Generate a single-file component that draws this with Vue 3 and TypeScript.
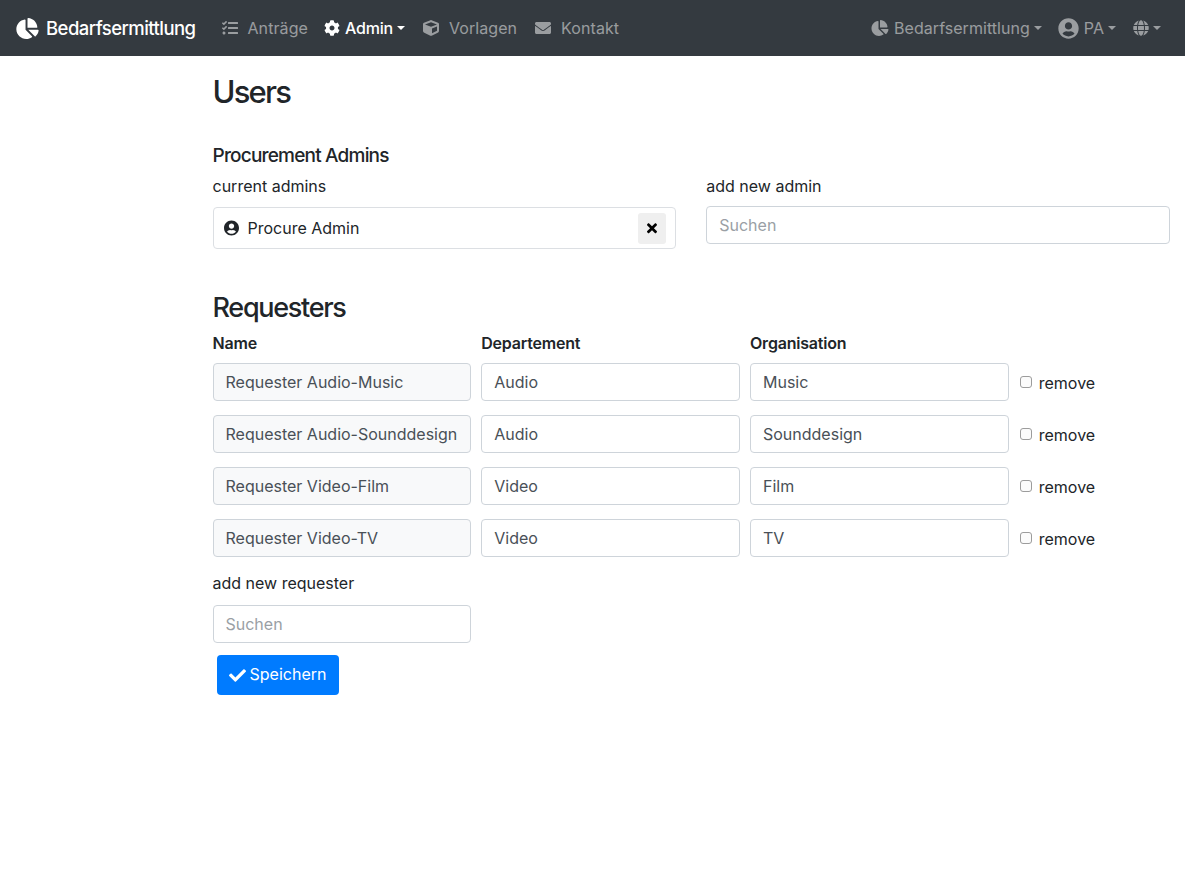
<script setup lang="ts">
interface Requester {
  name: string
  department: string
  organisation: string
}

const icons = {
  pie: { box: '0 0 544 512', d: 'M527.79 288H290.5l158.03 158.03c6.04 6.04 15.98 6.53 22.19.68 38.7-36.46 65.32-85.61 73.13-140.86 1.34-9.46-6.51-17.85-16.06-17.85zm-15.83-64.8C503.72 103.74 408.26 8.28 288.8.04 279.68-.59 272 7.1 272 16.24V240h223.77c9.14 0 16.82-7.68 16.19-16.8zM224 288V50.71c0-9.55-8.39-17.4-17.84-16.06C86.99 51.49-4.1 155.6.14 280.37 4.5 408.51 114.83 513.59 243.03 511.98c50.4-.63 96.97-16.87 135.26-44.03 7.9-5.6 8.42-17.23 1.57-24.08L224 288z' },
  tasks: { box: '0 0 512 512', d: 'M139.61 35.5a12 12 0 0 0-17 0L58.93 98.81l-22.7-22.12a12 12 0 0 0-17 0L3.53 92.41a12 12 0 0 0 0 17l47.59 47.4a12.78 12.78 0 0 0 17.61 0l15.59-15.62L156.52 69a12.09 12.09 0 0 0 .09-17zm0 159.19a12 12 0 0 0-17 0l-63.68 63.72-22.7-22.1a12 12 0 0 0-17 0L3.53 252a12 12 0 0 0 0 17L51 316.5a12.77 12.77 0 0 0 17.6 0l15.7-15.69 72.2-72.22a12 12 0 0 0 .09-16.9zM64 368c-26.49 0-48.59 21.5-48.59 48S37.53 464 64 464a48 48 0 0 0 0-96zm432 16H208a16 16 0 0 0-16 16v32a16 16 0 0 0 16 16h288a16 16 0 0 0 16-16v-32a16 16 0 0 0-16-16zm0-320H208a16 16 0 0 0-16 16v32a16 16 0 0 0 16 16h288a16 16 0 0 0 16-16V80a16 16 0 0 0-16-16zm0 160H208a16 16 0 0 0-16 16v32a16 16 0 0 0 16 16h288a16 16 0 0 0 16-16v-32a16 16 0 0 0-16-16z' },
  cog: { box: '0 0 512 512', d: 'M487.4 315.7l-42.6-24.6c4.3-23.2 4.3-47 0-70.2l42.6-24.6c4.9-2.8 7.1-8.6 5.5-14-11.1-35.6-30-67.8-54.7-94.6-3.8-4.1-10-5.1-14.8-2.3L380.8 110c-17.9-15.4-38.5-27.3-60.8-35.1V25.8c0-5.6-3.9-10.5-9.4-11.7-36.7-8.2-74.3-7.8-109.2 0-5.5 1.2-9.4 6.1-9.4 11.7V75c-22.2 7.9-42.8 19.8-60.8 35.1L88.7 85.5c-4.9-2.8-11-1.9-14.8 2.3-24.7 26.7-43.6 58.9-54.7 94.6-1.7 5.4.6 11.2 5.5 14L67.3 221c-4.3 23.2-4.3 47 0 70.2l-42.6 24.6c-4.9 2.8-7.1 8.6-5.5 14 11.1 35.6 30 67.8 54.7 94.6 3.8 4.1 10 5.1 14.8 2.3l42.6-24.6c17.9 15.4 38.5 27.3 60.8 35.1v49.2c0 5.6 3.9 10.5 9.4 11.7 36.7 8.2 74.3 7.8 109.2 0 5.5-1.2 9.4-6.1 9.4-11.7v-49.2c22.2-7.9 42.8-19.8 60.8-35.1l42.6 24.6c4.9 2.8 11 1.9 14.8-2.3 24.7-26.7 43.6-58.9 54.7-94.6 1.5-5.5-.7-11.3-5.6-14.1zM256 336c-44.1 0-80-35.9-80-80s35.9-80 80-80 80 35.9 80 80-35.9 80-80 80z' },
  cube: { box: '0 0 512 512', d: 'M239.1 6.3l-208 78c-18.7 7-31.1 25-31.1 45v225.1c0 18.2 10.3 34.8 26.5 42.9l208 104c13.5 6.8 29.4 6.8 42.9 0l208-104c16.3-8.1 26.5-24.8 26.5-42.9V129.3c0-20-12.4-37.9-31.1-44.9l-208-78C262 2.2 250 2.2 239.1 6.3zM256 68.4l192 72v1.1l-192 78-192-78v-1.1l192-72zm32 356V275.5l160-65v133.9l-160 80z' },
  envelope: { box: '0 0 512 512', d: 'M502.3 190.8c3.9-3.1 9.7-.2 9.7 4.7V400c0 26.5-21.5 48-48 48H48c-26.5 0-48-21.5-48-48V195.6c0-5 5.7-7.8 9.7-4.7 22.4 17.4 52.1 39.5 154.1 113.6 21.1 15.4 56.7 47.8 92.2 47.6 35.7.3 72-32.8 92.3-47.6 102-74.1 131.6-96.3 154-113.7zM256 320c23.2.4 56.6-29.2 73.4-41.4 132.7-96.3 142.8-104.7 173.4-128.7 5.8-4.5 9.2-11.5 9.2-18.9v-19c0-26.5-21.5-48-48-48H48C21.5 64 0 85.5 0 112v19c0 7.4 3.4 14.3 9.2 18.9 30.6 23.9 40.7 32.4 173.4 128.7 16.8 12.2 50.2 41.8 73.4 41.4z' },
  user: { box: '0 0 496 512', d: 'M248 8C111 8 0 119 0 256s111 248 248 248 248-111 248-248S385 8 248 8zm0 96c48.6 0 88 39.4 88 88s-39.4 88-88 88-88-39.4-88-88 39.4-88 88-88zm0 344c-58.7 0-111.3-26.6-146.5-68.2 18.8-35.4 55.6-59.8 98.5-59.8 2.4 0 4.8.4 7.1 1.1 13 4.2 26.6 6.9 40.9 6.9 14.3 0 28-2.7 40.9-6.9 2.3-.7 4.7-1.1 7.1-1.1 42.9 0 79.7 24.4 98.5 59.8C359.3 421.4 306.7 448 248 448z' },
  globe: { box: '0 0 496 512', d: 'M336.5 160C322 70.7 287.8 8 248 8s-74 62.7-88.5 152h177zM152 256c0 22.2 1.2 43.5 3.3 64h185.3c2.1-20.5 3.3-41.8 3.3-64s-1.2-43.5-3.3-64H155.3c-2.1 20.5-3.3 41.8-3.3 64zm324.7-96c-28.6-67.9-86.5-120.4-158-141.6 24.4 33.8 41.2 84.7 50 141.6h108zM177.2 18.4C105.8 39.6 47.8 92.1 19.3 160h108c8.7-56.9 25.5-107.8 49.9-141.6zM487.4 192H372.7c2.1 21 3.3 42.5 3.3 64s-1.2 43-3.3 64h114.6c5.5-20.5 8.6-41.8 8.6-64s-3.1-43.5-8.5-64zM120 256c0-21.5 1.2-43 3.3-64H8.6C3.2 212.5 0 233.8 0 256s3.2 43.5 8.6 64h114.6c-2-21-3.2-42.5-3.2-64zm39.5 96c14.5 89.3 48.7 152 88.5 152s74-62.7 88.5-152h-177zm159.3 141.6c71.4-21.2 129.4-73.7 158-141.6h-108c-8.8 56.9-25.6 107.8-50 141.6zM19.3 352c28.6 67.9 86.5 120.4 158 141.6-24.4-33.8-41.2-84.7-50-141.6h-108z' },
  check: { box: '0 0 512 512', d: 'M173.898 439.404l-166.4-166.4c-9.997-9.997-9.997-26.206 0-36.204l36.203-36.204c9.997-9.998 26.207-9.998 36.204 0L192 312.69 432.095 72.596c9.997-9.997 26.207-9.997 36.204 0l36.203 36.204c9.997 9.997 9.997 26.206 0 36.204l-294.4 294.401c-9.998 9.997-26.207 9.997-36.204-.001z' },
  times: { box: '0 0 352 512', d: 'M242.72 256l100.07-100.07c12.28-12.28 12.28-32.19 0-44.48l-22.24-22.24c-12.28-12.28-32.19-12.28-44.48 0L176 189.28 75.93 89.21c-12.28-12.28-32.19-12.28-44.48 0L9.21 111.45c-12.28 12.28-12.28 32.19 0 44.48L109.28 256 9.21 356.07c-12.28 12.28-12.28 32.19 0 44.48l22.24 22.24c12.28 12.28 32.2 12.28 44.48 0L176 322.72l100.07 100.07c12.28 12.28 32.2 12.28 44.48 0l22.24-22.24c12.28-12.28 12.28-32.19 0-44.48L242.72 256z' }
}

const requesters: Requester[] = [
  { name: 'Requester Audio-Music', department: 'Audio', organisation: 'Music' },
  { name: 'Requester Audio-Sounddesign', department: 'Audio', organisation: 'Sounddesign' },
  { name: 'Requester Video-Film', department: 'Video', organisation: 'Film' },
  { name: 'Requester Video-TV', department: 'Video', organisation: 'TV' }
]
</script>

<template>
  <nav class="navbar">
    <a class="brand">
      <svg class="brand-icon" :viewBox="icons.pie.box"><path :d="icons.pie.d" /></svg>
      Bedarfsermittlung
    </a>
    <div class="nav-left">
      <a class="nav-link"><svg class="ico" :viewBox="icons.tasks.box"><path :d="icons.tasks.d" /></svg>Anträge</a>
      <a class="nav-link active admin"><svg class="ico" :viewBox="icons.cog.box"><path :d="icons.cog.d" /></svg>Admin<span class="caret"></span></a>
      <a class="nav-link"><svg class="ico" :viewBox="icons.cube.box"><path :d="icons.cube.d" /></svg>Vorlagen</a>
      <a class="nav-link contact"><svg class="ico" :viewBox="icons.envelope.box"><path :d="icons.envelope.d" /></svg>Kontakt</a>
    </div>
    <div class="nav-right">
      <a class="nav-link tight"><svg class="ico" :viewBox="icons.pie.box"><path :d="icons.pie.d" /></svg>Bedarfsermittlung<span class="caret"></span></a>
      <a class="nav-link tight"><svg class="ico user-ico" :viewBox="icons.user.box"><path :d="icons.user.d" /></svg>PA<span class="caret"></span></a>
      <a class="nav-link tight globe"><svg class="ico" :viewBox="icons.globe.box"><path :d="icons.globe.d" /></svg><span class="caret"></span></a>
    </div>
  </nav>

  <main class="content">
    <h1>Users</h1>

    <h4>Procurement Admins</h4>
    <div class="admins">
      <div>
        <label class="field-label">current admins</label>
        <div class="admin-box">
          <svg class="admin-ico" :viewBox="icons.user.box"><path :d="icons.user.d" /></svg>
          <span class="admin-name">Procure Admin</span>
          <button class="remove-admin" type="button">
            <svg :viewBox="icons.times.box"><path :d="icons.times.d" /></svg>
          </button>
        </div>
      </div>
      <div>
        <label class="field-label">add new admin</label>
        <input class="form-control" placeholder="Suchen" />
      </div>
    </div>

    <h3>Requesters</h3>
    <div class="req-grid req-head">
      <strong>Name</strong>
      <strong>Departement</strong>
      <strong>Organisation</strong>
    </div>
    <div v-for="r in requesters" :key="r.name" class="req-grid req-row">
      <input class="form-control" :value="r.name" readonly />
      <input class="form-control" :value="r.department" />
      <input class="form-control" :value="r.organisation" />
      <label class="remove"><input type="checkbox" />remove</label>
    </div>

    <label class="field-label new-req">add new requester</label>
    <div class="req-grid">
      <input class="form-control" placeholder="Suchen" />
    </div>
    <button class="save" type="button">
      <svg :viewBox="icons.check.box"><path :d="icons.check.d" /></svg><span>Speichern</span>
    </button>
  </main>
</template>

<style>
body {
  background: #fff;
  font-family: Inter, "Liberation Sans", sans-serif;
}
</style>

<style scoped>
svg {
  fill: currentColor;
  display: block;
}

.navbar {
  height: 56px;
  background: #343a40;
  display: flex;
  align-items: center;
  padding: 0 16px;
  font-size: 16px;
}

.brand {
  display: flex;
  align-items: center;
  gap: 7px;
  color: #fff;
  font-size: 18.5px;
  letter-spacing: -0.55px;
  font-weight: 500;
  margin-right: 25px;
}

.brand-icon {
  width: 23px;
  height: 21px;
}

.nav-left {
  display: flex;
  gap: 16px;
}

.nav-right {
  display: flex;
  gap: 16px;
  margin-left: auto;
  margin-right: 7px;
}

.nav-link {
  display: flex;
  align-items: center;
  color: rgba(255, 255, 255, 0.5);
  letter-spacing: 0.08px;
}

.nav-link .ico {
  width: 18px;
  height: 16px;
  margin-right: 9px;
}

.nav-link.contact {
  margin-left: 1px;
}

.nav-right .nav-link {
  letter-spacing: 0.04px;
}

.nav-link.tight .ico {
  margin-right: 5px;
}

.nav-link.tight .user-ico {
  width: 21px;
  height: 21px;
}

.nav-link.globe {
  margin-right: 1px;
}

.nav-link.globe .ico {
  margin-right: -1px;
}

.nav-link.active {
  color: #fff;
  font-weight: 500;
}

.nav-link.admin {
  letter-spacing: -0.2px;
  margin-right: 1px;
}

.nav-link.admin .ico {
  margin-left: -1px;
  margin-right: 4px;
}

.caret {
  width: 0;
  height: 0;
  margin-left: 4px;
  border-top: 4.5px solid currentColor;
  border-left: 4.5px solid transparent;
  border-right: 4.5px solid transparent;
}

.content {
  margin-left: 197.5px;
  padding: 0 15px;
  color: #212529;
  font-size: 16px;
}

h1 {
  margin: 0;
  padding-top: 16px;
  font-size: 31px;
  line-height: 40px;
  font-weight: 500;
  letter-spacing: -1.8px;
}

h4 {
  margin: 32px 0 0;
  font-size: 19px;
  line-height: 23px;
  font-weight: 500;
  letter-spacing: -0.8px;
}

h3 {
  margin: 42px 0 0;
  font-size: 27px;
  line-height: 33px;
  font-weight: 500;
  letter-spacing: -1.3px;
}

.admins {
  display: grid;
  grid-template-columns: 1fr 1fr;
  gap: 30px;
}

.field-label {
  display: block;
  line-height: 24px;
  margin: 7px 0 8px;
}

.admin-box {
  height: 42px;
  margin-top: 9px;
  box-sizing: border-box;
  border: 1px solid #dcdfe3;
  border-radius: 4px;
  display: flex;
  align-items: center;
  padding: 0 9px 0 10px;
}

.admin-ico {
  width: 15px;
  height: 16px;
  margin-right: 9px;
}

.admin-name {
  flex: 1;
}

.remove-admin {
  width: 28px;
  height: 31px;
  padding: 0;
  border: 0;
  border-radius: 3px;
  background: #efefef;
  color: #000;
  display: flex;
  align-items: center;
  justify-content: center;
}

.remove-admin svg {
  width: 10px;
  height: 14.5px;
}

.form-control {
  display: block;
  width: 100%;
  height: 38px;
  box-sizing: border-box;
  padding: 6px 12px;
  border: 1px solid #ced4da;
  border-radius: 4px;
  background: #fff;
  color: #495057;
  font: inherit;
  outline: none;
}

.form-control::placeholder {
  color: #9a9fa5;
}

.form-control[readonly] {
  background: #f8f9fa;
}

.req-grid {
  display: grid;
  grid-template-columns: repeat(3, 258.75px) 1fr;
  gap: 10px;
  align-items: center;
}

.req-head {
  line-height: 24px;
  margin: 7px 0 8px;
}

.req-head strong {
  font-weight: 600;
  letter-spacing: -0.2px;
}

.req-row {
  margin-bottom: 14px;
}

.remove {
  display: flex;
  align-items: center;
  margin-top: 2px;
}

.remove input {
  appearance: none;
  box-sizing: border-box;
  width: 12px;
  height: 12px;
  margin: 0 7px 3px 1px;
  border: 1px solid #9c9c9c;
  border-radius: 3px;
  background: #fbfbfb;
}

.new-req {
  margin: 0 0 10px;
}

.save {
  margin: 12px 0 0 4px;
  height: 40px;
  width: 122px;
  border: 0;
  border-radius: 4px;
  background: #007bff;
  color: #fff;
  font: inherit;
  display: flex;
  align-items: center;
  justify-content: center;
  gap: 4px;
}

.save span {
  margin-top: -2px;
}

.save svg {
  width: 17px;
  height: 17px;
}
</style>
